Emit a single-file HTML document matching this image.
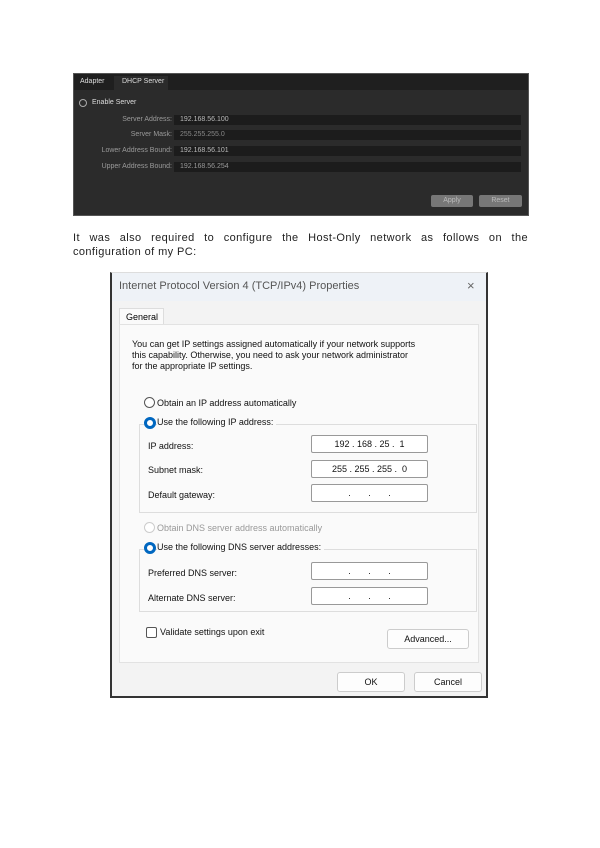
<!DOCTYPE html>
<html><head><meta charset="utf-8"><style>
*{margin:0;padding:0;box-sizing:border-box}
body{width:600px;height:848px;background:#fff;position:relative;font-family:"Liberation Sans",sans-serif;overflow:hidden}
.a{position:absolute}
.dk{left:73px;top:73px;width:456px;height:143px;background:#2b2b2b;border:1px solid #555}
.dk .lbl{position:absolute;font-size:7px;color:#9a9a9a;text-align:right;width:98px;left:0}
.dk .fld{position:absolute;left:100px;width:347px;height:10px;background:#1c1c1c;font-size:7px;color:#bbb;padding-left:6px;line-height:10px}
.p{font-size:11px;color:#222;line-height:14px;letter-spacing:0.4px}
.dlg{left:110px;top:272px;width:378px;height:426px;background:#f3f3f3;border-left:2px solid #333;border-right:2px solid #333;border-bottom:2px solid #333;border-top:1px solid #ddd}
.t{font-size:9px;color:#111;position:absolute;white-space:nowrap}
.box{position:absolute;background:#fff;border:1px solid #999;height:18px;font-size:9px;line-height:16px;color:#111;text-align:center;border-radius:2px}
.rad{position:absolute;width:11px;height:11px;border-radius:50%;border:1px solid #555;background:#fff}
.rad.on{border:3px solid #0067c0}
.btn{position:absolute;background:#fdfdfd;border:1px solid #ccc;border-radius:3px;font-size:9px;text-align:center;color:#111}
.grp{position:absolute;border:1px solid #ddd}
</style></head><body>
<div class="a dk">
 <div class="a" style="left:0;top:0;width:454px;height:16px;background:#1f1f1f"></div>
 <div class="a" style="left:6px;top:4px;font-size:7px;color:#ddd">Adapter</div>
 <div class="a" style="left:40px;top:2px;width:54px;height:14px;background:#2b2b2b;font-size:7px;color:#ddd;padding:2px 0 0 8px">DHCP Server</div>
 <div class="a" style="left:5px;top:25px;width:8px;height:8px;border:1px solid #aaa;border-radius:50%"></div>
 <div class="a" style="left:18px;top:25px;font-size:7px;color:#ddd">Enable Server</div>
 <div class="lbl" style="top:42px">Server Address:</div><div class="fld" style="top:41px">192.168.56.100</div>
 <div class="lbl" style="top:57px">Server Mask:</div><div class="fld" style="top:56px;color:#888">255.255.255.0</div>
 <div class="lbl" style="top:73px">Lower Address Bound:</div><div class="fld" style="top:72px">192.168.56.101</div>
 <div class="lbl" style="top:89px">Upper Address Bound:</div><div class="fld" style="top:88px;color:#999">192.168.56.254</div>
 <div class="a" style="left:357px;top:121px;width:42px;height:12px;background:#777;border-radius:2px;font-size:7px;color:#bbb;text-align:center;line-height:12px">Apply</div>
 <div class="a" style="left:405px;top:121px;width:43px;height:12px;background:#777;border-radius:2px;font-size:7px;color:#bbb;text-align:center;line-height:12px">Reset</div>
</div>
<div class="a p" style="left:73px;top:231px;width:455px;text-align:justify;text-align-last:justify">It was also required to configure the Host-Only network as follows on the</div>
<div class="a p" style="left:73px;top:245px">configuration of my PC:</div>

<div class="a dlg">
 <div class="a" style="left:0;top:0;width:374px;height:28px;background:#eef2f7"></div>
 <div class="a" style="left:7px;top:7px;font-size:11px;color:#555">Internet Protocol Version 4 (TCP/IPv4) Properties</div>
 <div class="a" style="left:355px;top:5px;font-size:13px;color:#666">×</div>
 <div class="a" style="left:7px;top:35px;width:45px;height:17px;background:#fafafa;border:1px solid #ddd;border-bottom:none;font-size:9px;padding:3px 0 0 6px">General</div>
 <div class="a" style="left:7px;top:51px;width:360px;height:339px;background:#fafafa;border:1px solid #e2e2e2">
  <div class="t" style="left:12px;top:14px;line-height:11px">You can get IP settings assigned automatically if your network supports<br>this capability. Otherwise, you need to ask your network administrator<br>for the appropriate IP settings.</div>
  <div class="rad" style="left:24px;top:72px"></div><div class="t" style="left:37px;top:73px">Obtain an IP address automatically</div>
  <div class="grp" style="left:19px;top:99px;width:338px;height:89px"></div>
  <div class="rad on" style="left:24px;top:92px;width:12px;height:12px"></div><div class="t" style="left:37px;top:92px;background:#fafafa;padding-right:3px">Use the following IP address:</div>
  <div class="t" style="left:28px;top:116px">IP address:</div><div class="box" style="left:191px;top:110px;width:117px">192 . 168 . 25 . &nbsp;1</div>
  <div class="t" style="left:28px;top:140px">Subnet mask:</div><div class="box" style="left:191px;top:135px;width:117px">255 . 255 . 255 . &nbsp;0</div>
  <div class="t" style="left:28px;top:165px">Default gateway:</div><div class="box" style="left:191px;top:159px;width:117px">. &nbsp; &nbsp; &nbsp; . &nbsp; &nbsp; &nbsp; .</div>
  <div class="rad" style="left:24px;top:197px;border-color:#ccc"></div><div class="t" style="left:37px;top:198px;color:#999">Obtain DNS server address automatically</div>
  <div class="grp" style="left:19px;top:224px;width:338px;height:63px"></div>
  <div class="rad on" style="left:24px;top:217px;width:12px;height:12px"></div><div class="t" style="left:37px;top:217px;background:#fafafa;padding-right:3px">Use the following DNS server addresses:</div>
  <div class="t" style="left:28px;top:243px">Preferred DNS server:</div><div class="box" style="left:191px;top:237px;width:117px">. &nbsp; &nbsp; &nbsp; . &nbsp; &nbsp; &nbsp; .</div>
  <div class="t" style="left:28px;top:268px">Alternate DNS server:</div><div class="box" style="left:191px;top:262px;width:117px">. &nbsp; &nbsp; &nbsp; . &nbsp; &nbsp; &nbsp; .</div>
  <div class="a" style="left:26px;top:302px;width:11px;height:11px;border:1px solid #555;border-radius:2px;background:#fff"></div><div class="t" style="left:40px;top:302px">Validate settings upon exit</div>
  <div class="btn" style="left:267px;top:304px;width:82px;height:20px;line-height:18px">Advanced...</div>
 </div>
 <div class="btn" style="left:225px;top:399px;width:68px;height:20px;line-height:18px">OK</div>
 <div class="btn" style="left:302px;top:399px;width:68px;height:20px;line-height:18px">Cancel</div>
</div>
</body></html>
